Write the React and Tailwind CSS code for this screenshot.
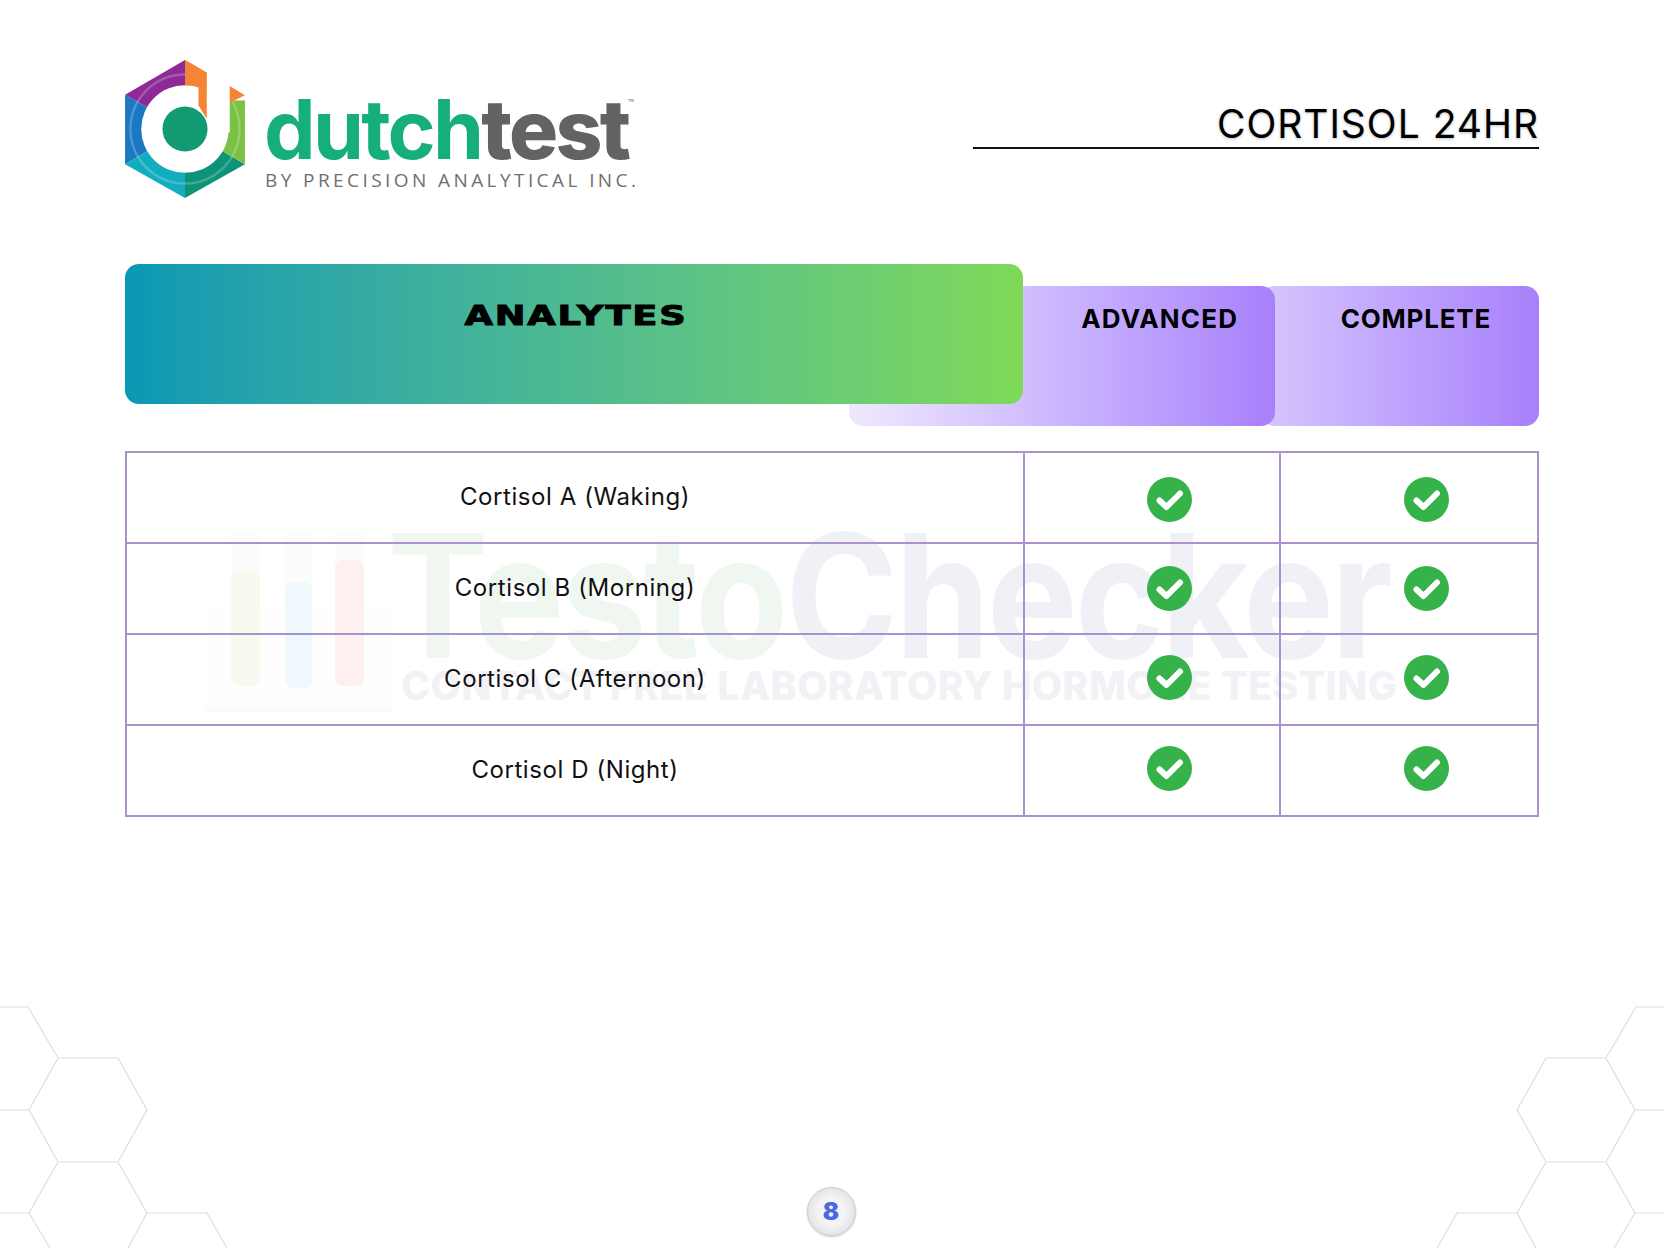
import React from 'react';

const rows = [
  { name: 'Cortisol A (Waking)', nudge: 'mt-[4px]', textNudge: 'pb-[2px]' },
  { name: 'Cortisol B (Morning)', nudge: 'mt-0', textNudge: 'pb-[2px]' },
  { name: 'Cortisol C (Afternoon)', nudge: 'mb-[4px]', textNudge: 'pb-[2px]' },
  { name: 'Cortisol D (Night)', nudge: 'mb-[4px]', textNudge: 'pb-[2px]' },
];

function LogoMark() {
  return (
    <svg width="120" height="138" viewBox="47 30 356 410" className="shrink-0">
      <polygon points="47,133 225,30 225,235" fill="#8e2a97" />
      <polygon points="47,133 47,340 225,235" fill="#1b79c4" />
      <polygon points="47,340 225,440 225,235" fill="#12adc0" />
      <polygon points="225,440 403,340 225,235" fill="#0c9378" />
      <polygon points="403,340 403,150 300,150 225,235" fill="#7cc142" />
      <polygon points="225,30 290,68 290,210 225,210" fill="#f58535" />
      <circle cx="225" cy="235" r="162" fill="none" stroke="#ffffff" strokeOpacity="0.22" strokeWidth="7" />
      <circle cx="225" cy="235" r="130" fill="#ffffff" />
      <polygon points="225,105 265,105 265,165 290,205 290,68 225,30" fill="#f58535" />
      <rect x="290" y="20" width="68" height="225" fill="#ffffff" />
      <polygon points="358,107 403,135 358,157" fill="#f58535" />
      <circle cx="225" cy="235" r="67" fill="#129a72" />
    </svg>
  );
}

function Logo() {
  return (
    <div className="flex items-start gap-[19px]">
      <LogoMark />
      <div className="relative flex flex-col">
        <div className="mt-[27px] flex h-[86px] items-end text-[82px] leading-[86px] tracking-[-0.034em] font-['Inter',sans-serif]">
          <span className="font-bold text-[#17ae7e]">dutch</span>
          <span className="font-extrabold text-[#636363]">test</span>
        </div>
        <div className="absolute left-[364px] top-[38px] text-[10px] leading-none text-[#777777] font-['Inter',sans-serif]">™</div>
        <div className="-mt-[6px] ml-[1px] whitespace-nowrap text-[19px] leading-[26px] tracking-[0.18em] text-[#6f6f6f] font-['Open_Sans',sans-serif]">
          BY PRECISION ANALYTICAL INC.
        </div>
      </div>
    </div>
  );
}

function CheckIcon() {
  return (
    <svg width="45" height="45" viewBox="0 0 45 45" className="block">
      <circle cx="22.5" cy="22.5" r="22.5" fill="#36b24a" />
      <path d="M12.5 23.5 L19.5 30 L33 16.5" fill="none" stroke="#ffffff" strokeWidth="6" strokeLinecap="round" strokeLinejoin="round" />
    </svg>
  );
}

function Watermark() {
  return (
    <div className="absolute left-[205px] top-[526px] flex items-start">
      <svg width="190" height="186" viewBox="0 0 190 186" className="shrink-0">
        <rect x="0" y="180" width="188" height="6" fill="#fbfbfb" />
        <rect x="4" y="82" width="180" height="98" fill="#fefefe" />
        <rect x="26" y="4" width="29" height="156" rx="8" fill="#fcfcfc" />
        <rect x="26" y="44" width="29" height="116" rx="8" fill="#f7fbef" />
        <rect x="80" y="4" width="27" height="156" rx="8" fill="#fcfcfc" />
        <rect x="80" y="56" width="27" height="106" rx="8" fill="#eef8fd" />
        <rect x="130" y="4" width="29" height="156" rx="8" fill="#fcfcfc" />
        <rect x="130" y="34" width="29" height="126" rx="8" fill="#fdf0ee" />
      </svg>
      <div className="-ml-[8px] flex flex-col font-['Inter',sans-serif]">
        <div className="origin-left scale-x-[0.886] whitespace-nowrap text-[172px] font-bold leading-[138px] tracking-[-0.02em]">
          <span className="text-[#f0f7f0]">Testo</span>
          <span className="text-[#f0f1f7]">Checker</span>
        </div>
        <div className="mt-[2px] ml-[14px] whitespace-nowrap text-[39px] font-extrabold leading-[40px] tracking-[0.015em] text-[#f1f1f6]">
          CONTACT FREE LABORATORY HORMONE TESTING
        </div>
      </div>
    </div>
  );
}

function Hexagons({ className }) {
  return (
    <svg width="240" height="248" viewBox="0 1000 240 248" className={className} fill="none" stroke="#dedede" strokeWidth="1.2">
      <path d="M0 1007 H28 L58 1058 L29 1110 H0" />
      <path d="M58 1058 H118 L147 1110 L118 1162 H58 L29 1110" />
      <path d="M58 1162 L29 1213 H0" />
      <path d="M29 1213 L50 1248" />
      <path d="M118 1162 L147 1213 L128 1248" />
      <path d="M147 1213 H207 L227 1248" />
    </svg>
  );
}

export default function App() {
  return (
    <div className="relative h-[1248px] w-[1664px] overflow-hidden bg-white font-['Inter',sans-serif] text-black">
      <Watermark />
      <Hexagons className="absolute bottom-0 left-0" />
      <Hexagons className="absolute bottom-0 right-0 -scale-x-100" />

      <div className="relative px-[125px] pt-[60px]">
        <div className="flex items-start justify-between">
          <Logo />
          <div className="mt-[41px] w-[566px] border-b-[2px] border-[#111111] text-right text-[39px] leading-[46px] tracking-[0.025em] [text-shadow:0_1px_3px_rgba(0,0,0,0.25)]">
            CORTISOL 24HR
          </div>
        </div>

        <div className="mt-[66px] flex items-start">
          <div className="relative z-20 h-[140px] w-[899px] rounded-[14px] bg-gradient-to-r from-[#0898b4] to-[#7fd957] pt-[35px] pl-[4px] text-center">
            <span className="inline-block scale-x-[1.36] text-[27px] font-black leading-[34px] tracking-[0.05em] [-webkit-text-stroke:1px_black] font-['DejaVu_Sans',sans-serif]">
              ANALYTES
            </span>
          </div>
          <div className="relative z-10 -ml-[174px] mt-[22px] flex h-[140px] w-[426px] justify-end rounded-[14px] bg-gradient-to-r from-[#f0e9fd] to-[#a87ffb] pr-[37px] pt-[17px]">
            <span className="text-[26px] font-bold leading-[32px] tracking-[0.045em]">ADVANCED</span>
          </div>
          <div className="-ml-[14px] mt-[22px] flex h-[140px] w-[278px] justify-end rounded-[14px] bg-gradient-to-r from-[#d6c6fd] to-[#a87ffb] pr-[48px] pt-[17px]">
            <span className="text-[26px] font-bold leading-[32px] tracking-[0.03em]">COMPLETE</span>
          </div>
        </div>

        <table className="mt-[25px] w-[1414px] table-fixed border-collapse border-2 border-[#ab92cc]">
          <colgroup>
            <col className="w-[898px]" />
            <col className="w-[256px]" />
            <col />
          </colgroup>
          <tbody>
            {rows.map((row) => (
              <tr key={row.name} className="h-[91px]">
                <td className={`border-2 border-[#ab92cc] text-center text-[24px] tracking-[0.024em] text-[#111111] ${row.textNudge}`}>{row.name}</td>
                <td className="border-2 border-[#ab92cc]">
                  <div className={`flex justify-center pl-[35px] ${row.nudge}`}><CheckIcon /></div>
                </td>
                <td className="border-2 border-[#ab92cc]">
                  <div className={`flex justify-center pl-[35px] ${row.nudge}`}><CheckIcon /></div>
                </td>
              </tr>
            ))}
          </tbody>
        </table>

        <div className="mt-[370px] flex justify-center">
          <div className="mr-[2px] flex h-[49px] w-[49px] items-center justify-center rounded-full border border-[#c9c9cf] bg-[radial-gradient(circle,#f4f4f6_40%,#e4e4e8_72%,#c2c2c9_100%)] text-[24px] font-black leading-none text-[#4a68e0] shadow-[0_1px_2px_rgba(0,0,0,0.2)]">
            8
          </div>
        </div>
      </div>
    </div>
  );
}
